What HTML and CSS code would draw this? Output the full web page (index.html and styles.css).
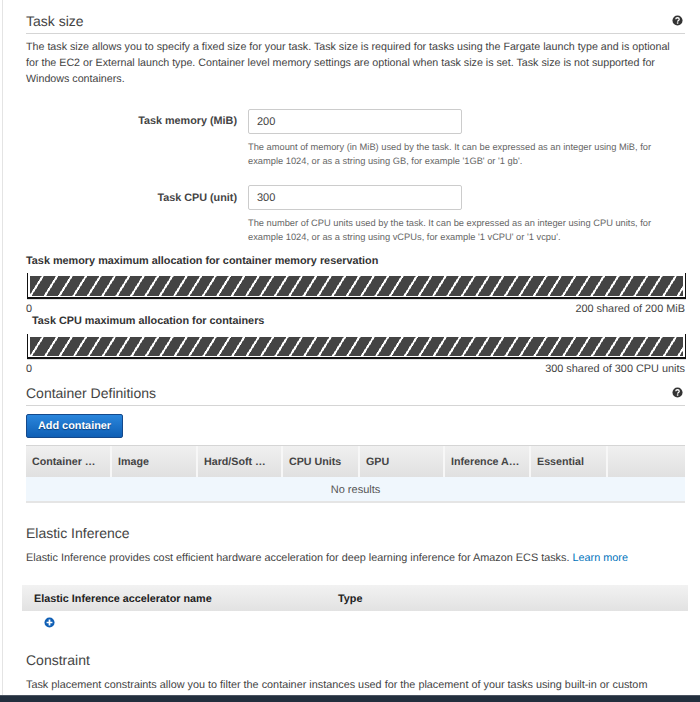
FILE: index.html
```html
<!DOCTYPE html>
<html lang="en">
<head>
<meta charset="utf-8">
<title>Task size</title>
<link rel="stylesheet" href="styles.css">
</head>
<body>
<main class="page">
  <section class="task-size">
    <div class="section-head">
      <h2>Task size</h2>
      <svg class="help" viewBox="0 0 12 12"><circle cx="6" cy="6" r="5.5" fill="#333"/><path d="M4.1 4.7C4.1 3.5 5 3 6 3s1.9.6 1.9 1.6c0 1.5-1.7 1.4-1.7 2.7" fill="none" stroke="#fff" stroke-width="1.4"/><rect x="5.3" y="8" width="1.6" height="1.5" fill="#fff"/></svg>
    </div>
    <p class="desc">The task size allows you to specify a fixed size for your task. Task size is required for tasks using the Fargate launch type and is optional for the EC2 or External launch type. Container level memory settings are optional when task size is set. Task size is not supported for Windows containers.</p>
    <div class="field field-first">
      <label class="field-label">Task memory (MiB)</label>
      <div class="field-body">
        <input class="text-input" type="text" value="200">
        <p class="hint">The amount of memory (in MiB) used by the task. It can be expressed as an integer using MiB, for example 1024, or as a string using GB, for example '1GB' or '1 gb'.</p>
      </div>
    </div>
    <div class="field field-second">
      <label class="field-label">Task CPU (unit)</label>
      <div class="field-body">
        <input class="text-input" type="text" value="300">
        <p class="hint">The number of CPU units used by the task. It can be expressed as an integer using CPU units, for example 1024, or as a string using vCPUs, for example '1 vCPU' or '1 vcpu'.</p>
      </div>
    </div>
  </section>

  <section class="allocation">
    <h3 class="bar-title">Task memory maximum allocation for container memory reservation</h3>
    <div class="bar"><div class="bar-fill"></div></div>
    <div class="bar-scale"><span>0</span><span>200 shared of 200 MiB</span></div>
    <h3 class="bar-title bar-title-cpu">Task CPU maximum allocation for containers</h3>
    <div class="bar bar-cpu"><div class="bar-fill"></div></div>
    <div class="bar-scale"><span>0</span><span>300 shared of 300 CPU units</span></div>
  </section>

  <section class="containers">
    <div class="section-head">
      <h2>Container Definitions</h2>
      <svg class="help" viewBox="0 0 12 12"><circle cx="6" cy="6" r="5.5" fill="#333"/><path d="M4.1 4.7C4.1 3.5 5 3 6 3s1.9.6 1.9 1.6c0 1.5-1.7 1.4-1.7 2.7" fill="none" stroke="#fff" stroke-width="1.4"/><rect x="5.3" y="8" width="1.6" height="1.5" fill="#fff"/></svg>
    </div>
    <button class="btn-primary" type="button">Add container</button>
    <div class="grid-table">
      <div class="grid-head">
        <div class="cell">Container …</div>
        <div class="cell">Image</div>
        <div class="cell">Hard/Soft …</div>
        <div class="cell">CPU Units</div>
        <div class="cell">GPU</div>
        <div class="cell">Inference A…</div>
        <div class="cell">Essential</div>
        <div class="cell"></div>
      </div>
      <div class="grid-empty">No results</div>
    </div>
  </section>

  <section class="elastic">
    <h2 class="plain-head">Elastic Inference</h2>
    <p class="desc">Elastic Inference provides cost efficient hardware acceleration for deep learning inference for Amazon ECS tasks. <a href="#">Learn more</a></p>
    <div class="acc-head"><span class="acc-name">Elastic Inference accelerator name</span><span>Type</span></div>
    <div class="acc-add">
      <svg class="plus" viewBox="0 0 12 12"><circle cx="6" cy="6" r="5.5" fill="#0f5fb5"/><path d="M2.8 6h6.4M6 2.8v6.4" stroke="#fff" stroke-width="1.9"/></svg>
    </div>
  </section>

  <section class="constraint">
    <h2 class="plain-head">Constraint</h2>
    <p class="desc">Task placement constraints allow you to filter the container instances used for the placement of your tasks using built-in or custom</p>
  </section>
</main>
<div class="bottom-bar"></div>
</body>
</html>
```
FILE: styles.css
```css
* { box-sizing: border-box; }
html, body { margin: 0; height: 702px; overflow: hidden; background: #fff; }
body {
  font-family: "Liberation Sans", Arial, sans-serif;
  font-size: 11px;
  color: #444;
  display: flex;
  flex-direction: column;
  text-rendering: geometricPrecision;
}
.page {
  flex: 1;
  min-height: 0;
  overflow: hidden;
  margin-left: 2px;
  border-left: 1px solid #e4e4e4;
  padding: 0 15px 0 23px;
}
h2, h3, p { margin: 0; }
.section-head {
  display: flex;
  justify-content: space-between;
  align-items: center;
  border-bottom: 1px solid #d5d5d5;
}
.task-size .section-head { height: 34px; padding-top: 8px; }
.containers .section-head { height: 24px; padding-bottom: 2px; }
h2 {
  font-size: 14px;
  font-weight: 400;
  color: #444;
}
.help { width: 11px; height: 11px; margin-right: 2px; }
.desc { font-size: 10.7px; line-height: 16px; color: #444; }
.task-size .desc { margin-top: 5px; }
.field { display: flex; }
.field-first { margin-top: 22px; }
.field-second { margin-top: 17px; }
.field-label {
  width: 211px;
  margin-right: 11px;
  text-align: right;
  font-weight: 700;
  font-size: 10.8px;
  line-height: 24px;
  color: #444;
}
.field-second .field-label { line-height: 26px; }
.field-body { width: 427px; }
.text-input {
  display: block;
  width: 214px;
  height: 25px;
  border: 1px solid #ccc;
  border-radius: 2px;
  padding: 0 8px;
  font: 11px "Liberation Sans", Arial, sans-serif;
  color: #444;
  background: #fff;
  outline: none;
  text-rendering: geometricPrecision;
}
.hint { margin-top: 6px; font-size: 9.3px; line-height: 14px; color: #666; width: 410px; }
.allocation { margin-top: 9px; }
.bar-title { font-size: 10.85px; line-height: 16px; font-weight: 700; color: #333; }
.bar-title-cpu { margin: -4px 0 0 6px; }
.bar {
  margin: 4px -1px 0 1px;
  height: 26px;
  border: solid #111;
  border-width: 0 1px 2px 1px;
  border-top: 0;
  box-shadow: 0 1px 0 #ddd;
  padding: 3px 2px 1px;
  background: #fff;
}
.bar-cpu { height: 25px; margin-top: 5px; }
.bar-fill {
  height: 100%;
  background: repeating-linear-gradient(122deg, #444 0 9.6px, #999 9.6px 10.1px, #fff 10.1px 11.7px, #999 11.7px 12.2px);
}
.bar-scale {
  display: flex;
  justify-content: space-between;
  font-size: 10.9px;
  line-height: 16px;
  margin-top: 2px;
  color: #444;
}
.containers { margin-top: 5px; }
.btn-primary {
  display: block;
  margin-top: 8px;
  width: 97px;
  height: 24px;
  padding: 0;
  border: 1px solid #15498b;
  border-radius: 2px;
  background: linear-gradient(#2a86dc, #0f5fb5);
  color: #fff;
  font: 700 10.9px "Liberation Sans", Arial, sans-serif;
  text-shadow: 0 1px 1px #0b3f7a;
  text-rendering: geometricPrecision;
}
.grid-table { margin-top: 7px; border-bottom: 2px solid #e5e5e5; }
.grid-head {
  display: grid;
  grid-template-columns: 86px 86px 85px 77px 85px 86px 77px 77px;
  height: 32px;
  background: linear-gradient(#f0f0f0, #e0e0e0);
  border-top: 1px solid #d5d5d5;
}
.cell {
  font-size: 10.7px;
  font-weight: 700;
  line-height: 32px;
  padding-left: 6px;
  color: #444;
  border-right: 2px solid #f7f7f7;
  white-space: nowrap;
  overflow: hidden;
}
.cell:last-child { border-right: 0; }
.grid-empty {
  height: 24px;
  background: #f0f7fd;
  text-align: center;
  font-size: 11px;
  line-height: 26px;
  color: #555;
}
.elastic { margin-top: 20px; }
.plain-head { line-height: 20px; }
.elastic .desc { margin-top: 7px; font-size: 10.85px; }
a { color: #0073bb; text-decoration: none; }
.acc-head {
  display: flex;
  margin: 19px -3px 0 -4px;
  height: 26px;
  padding: 2px 0 0 12px;
  align-items: center;
  background: linear-gradient(#f2f2f2, #e2e2e2);
  font-size: 10.8px;
  font-weight: 700;
  color: #222;
}
.acc-name { width: 304px; }
.acc-add { padding: 6px 0 0 18px; height: 28px; }
.plus { width: 11px; height: 11px; display: block; }
.constraint { margin-top: 11px; }
.constraint .desc { margin-top: 7px; font-size: 10.85px; white-space: nowrap; }
.bottom-bar { height: 7px; flex: none; background: #232f3e; border-top: 1px solid #4a5360; }
```
